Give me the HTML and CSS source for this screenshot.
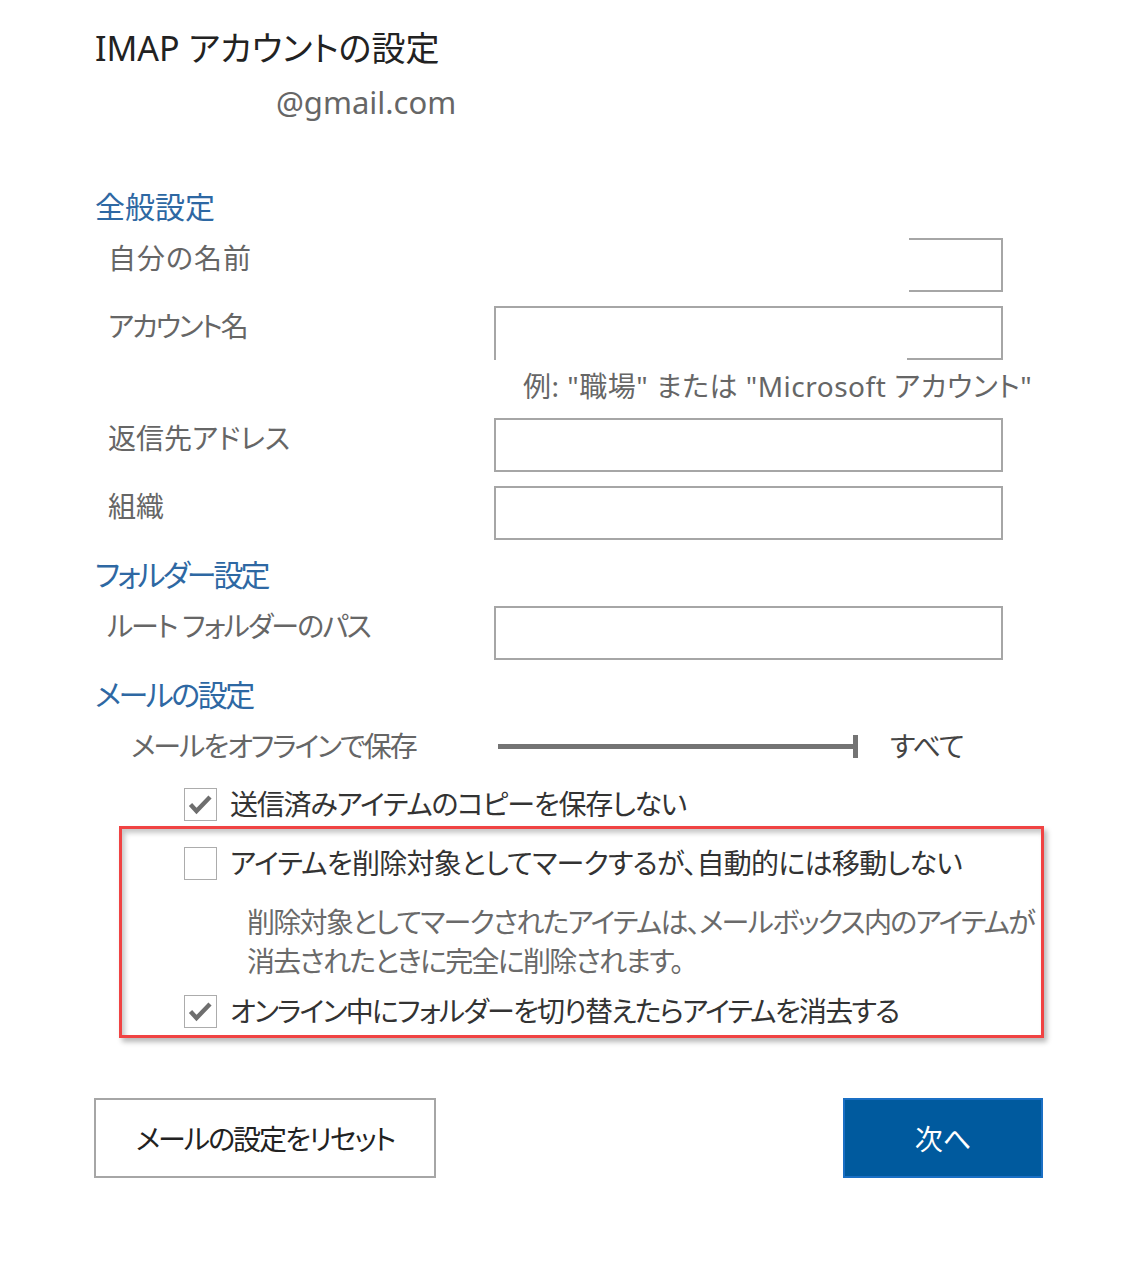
FILE: index.html
```html
<!DOCTYPE html>
<html lang="ja">
<head>
<meta charset="utf-8">
<title>IMAP アカウントの設定</title>
<link rel="stylesheet" href="styles.css">
</head>
<body>
<div class="page">
  <h1 class="title">IMAP アカウントの設定</h1>
  <div class="email">@gmail.com</div>

  <h2 class="section first">全般設定</h2>
  <div class="row">
    <div class="label ls-kanji">自分の名前</div>
    <div class="field-wrap"><div class="field field-cut"></div></div>
  </div>
  <div class="row row-open">
    <div class="label ls-kana">アカウント名</div>
    <div class="field field-open"></div>
  </div>
  <div class="hint">例: "職場" または "Microsoft アカウント"</div>
  <div class="row">
    <div class="label">返信先アドレス</div>
    <div class="field"></div>
  </div>
  <div class="row">
    <div class="label">組織</div>
    <div class="field"></div>
  </div>

  <h2 class="section ls-sec1">フォルダー設定</h2>
  <div class="row">
    <div class="label ls-path">ルート フォルダーのパス</div>
    <div class="field"></div>
  </div>

  <h2 class="section ls-sec2">メールの設定</h2>
  <div class="slider-row">
    <div class="slider-label">メールをオフラインで保存</div>
    <div class="slider"><div class="track"></div><div class="cap"></div></div>
    <div class="slider-value">すべて</div>
  </div>

  <div class="check-row outer">
    <span class="box"><svg viewBox="0 0 33 33" width="33" height="33"><path d="M6.5 16.5 L12.5 23 L26 9" fill="none" stroke="#6e6e6e" stroke-width="4.4" stroke-linejoin="miter"/></svg></span>
    <span class="check-text ls-c1">送信済みアイテムのコピーを保存しない</span>
  </div>

  <div class="highlight">
    <div class="check-row">
      <span class="box"></span>
      <span class="check-text ls-c2">アイテムを削除対象としてマークするが、自動的には移動しない</span>
    </div>
    <p class="desc">削除対象としてマークされたアイテムは、メールボックス内のアイテムが<br>消去されたときに完全に削除されます。</p>
    <div class="check-row last">
      <span class="box"><svg viewBox="0 0 33 33" width="33" height="33"><path d="M6.5 16.5 L12.5 23 L26 9" fill="none" stroke="#6e6e6e" stroke-width="4.4" stroke-linejoin="miter"/></svg></span>
      <span class="check-text ls-c3">オンライン中にフォルダーを切り替えたらアイテムを消去する</span>
    </div>
  </div>

  <div class="buttons">
    <button class="btn btn-reset">メールの設定をリセット</button>
    <button class="btn btn-next">次へ</button>
  </div>
</div>
</body>
</html>
```

FILE: styles.css
```css
* { box-sizing: border-box; }
html, body { margin: 0; padding: 0; background: #fff; }
body {
  font-family: "Noto Sans", "Noto Sans CJK JP", sans-serif;
  font-feature-settings: "palt";
  color: #333;
}
.page {
  width: 1141px;
  padding: 28px 0 0 95px;
}
.title {
  margin: 0;
  font-size: 34px;
  font-weight: 400;
  line-height: 40px;
  color: #222;
}
.email {
  margin-top: 14px;
  padding-left: 181px;
  font-size: 31px;
  line-height: 40px;
  color: #666;
}
.section {
  margin: 15px 0 11px;
  font-size: 30px;
  font-weight: 400;
  line-height: 40px;
  color: #2e68a3;
}
.section.first { margin-top: 65px; }
.ls-sec1 { letter-spacing: -3px; }
.ls-sec2 { letter-spacing: -2.5px; }
.row {
  display: flex;
  align-items: flex-start;
  width: 908px;
  margin-bottom: 14px;
}
.row-open { margin-bottom: 6px; }
.label {
  width: 399px;
  padding-left: 13px;
  font-size: 28px;
  line-height: 40px;
  color: #666;
  white-space: nowrap;
}
.ls-kanji { letter-spacing: 1px; }
.ls-kana { letter-spacing: -2.2px; }
.ls-path { padding-left: 12px; letter-spacing: -1.9px; }
.field {
  width: 509px;
  height: 54px;
  border: 2px solid #a6a6a6;
  background: #fff;
}
.field-wrap {
  width: 509px;
  height: 54px;
  display: flex;
  justify-content: flex-end;
}
.field-cut {
  width: 94px;
  border-left: none;
}
.field-open {
  border-bottom: none;
  background: linear-gradient(#a6a6a6, #a6a6a6) right bottom / 94px 2px no-repeat;
}
.hint {
  padding-left: 428px;
  font-size: 28px;
  line-height: 40px;
  color: #666;
  letter-spacing: 0.5px;
  margin-bottom: 12px;
  white-space: nowrap;
}
.slider-row {
  display: flex;
  align-items: center;
  height: 40px;
  padding-left: 36px;
}
.slider-label {
  width: 367px;
  font-size: 28px;
  line-height: 40px;
  color: #666;
  letter-spacing: -2px;
  white-space: nowrap;
}
.slider {
  display: flex;
  align-items: center;
  width: 360px;
  margin-right: 32px;
}
.track {
  flex: 1;
  height: 5px;
  background: #747474;
}
.cap {
  width: 5px;
  height: 23px;
  background: #747474;
}
.slider-value {
  font-size: 28px;
  line-height: 40px;
  color: #444;
  letter-spacing: -1px;
}
.check-row {
  display: flex;
  align-items: center;
  gap: 13px;
  height: 40px;
}
.check-row.outer {
  margin-top: 18px;
  margin-bottom: 2px;
  padding-left: 89px;
}
.box {
  width: 33px;
  height: 33px;
  border: 1px solid #acacac;
  background: #fff;
  flex: none;
  display: block;
}
.box svg { display: block; margin: -1px 0 0 -1px; }
.check-text {
  font-size: 28px;
  line-height: 40px;
  color: #333;
  white-space: nowrap;
}
.ls-c1 { letter-spacing: -1.2px; }
.ls-c2 { letter-spacing: -0.7px; }
.ls-c3 { letter-spacing: -1.75px; }
.highlight {
  margin-left: 24px;
  width: 925px;
  border: 3px solid #f04343;
  padding: 14px 0 4px 62px;
  box-shadow: 3px 4px 5px rgba(0, 0, 0, 0.28), inset 3px 4px 5px rgba(0, 0, 0, 0.22);
}
.desc {
  margin: 20px 0 10px;
  padding-left: 63px;
  font-size: 28px;
  line-height: 39px;
  color: #6a6a6a;
  letter-spacing: -1.7px;
  white-space: nowrap;
}
.buttons {
  display: flex;
  justify-content: space-between;
  width: 948px;
  margin-top: 60px;
}
.btn {
  font-family: inherit;
  font-feature-settings: "palt";
  font-size: 28px;
  height: 80px;
  margin: 0;
  padding: 0;
  cursor: pointer;
}
.btn-reset {
  width: 342px;
  margin-left: -1px;
  background: #fff;
  border: 2px solid #a6a6a6;
  color: #222;
  letter-spacing: -2px;
}
.btn-next {
  width: 200px;
  background: #005a9e;
  border: 2px solid #1a6fc4;
  color: #fff;
}
```
